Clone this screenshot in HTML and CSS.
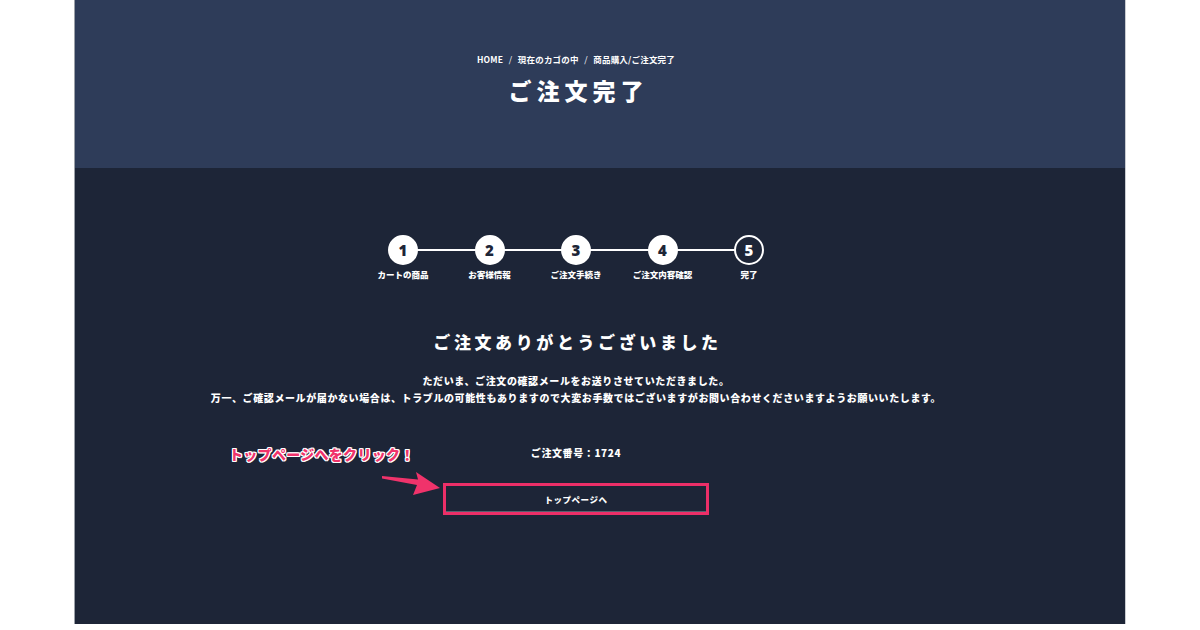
FILE: index.html
```html
<!DOCTYPE html>
<html lang="ja">
<head>
<meta charset="utf-8">
<title>ご注文完了</title>
<link rel="stylesheet" href="styles.css">
</head>
<body>
<div class="page">
  <header class="hero">
    <nav class="crumbs">HOME<span class="sep">/</span>現在のカゴの中<span class="sep">/</span>商品購入/ご注文完了</nav>
    <h1 class="title">ご注文完了</h1>
  </header>
  <main class="content">
    <ol class="steps">
      <li class="step"><span class="num">1</span><span class="label">カートの商品</span></li>
      <li class="step"><span class="num">2</span><span class="label">お客様情報</span></li>
      <li class="step"><span class="num">3</span><span class="label">ご注文手続き</span></li>
      <li class="step"><span class="num">4</span><span class="label">ご注文内容確認</span></li>
      <li class="step current"><span class="num">5</span><span class="label">完了</span></li>
    </ol>
    <h2 class="thanks">ご注文ありがとうございました</h2>
    <p class="message">ただいま、ご注文の確認メールをお送りさせていただきました。<br>万一、ご確認メールが届かない場合は、トラブルの可能性もありますので大変お手数ではございますがお問い合わせくださいますようお願いいたします。</p>
    <p class="order">ご注文番号：1724</p>
    <div class="action">
      <a class="top-btn" href="#">トップページへ</a>
      <span class="note">トップページへをクリック！</span>
      <svg class="arrow" width="62" height="26" viewBox="0 0 62 26"><polygon points="0,4 36,7.5 34,0 58,16 31,23 35,13 0,6.5" fill="#f0336b"/></svg>
    </div>
  </main>
</div>
</body>
</html>
```
FILE: styles.css
```css
* { box-sizing: border-box; }
html, body { margin: 0; padding: 0; background: #ffffff; }
body {
  font-family: "Noto Sans CJK JP", "Noto Sans", sans-serif;
  font-weight: 900;
  color: #ffffff;
}
.page {
  margin-left: 74px;
  width: 1052px;
  height: 624px;
  border-left: 1px solid #9ba0a8;
  border-right: 1px solid #c9ccd1;
  background: #1d2537;
  display: flex;
  flex-direction: column;
}
.hero {
  height: 168px;
  background: #2e3c59;
  display: flex;
  flex-direction: column;
  align-items: center;
  padding: 53px 48px 0 0;
}
.crumbs {
  font-size: 8.5px;
  line-height: 12px;
  letter-spacing: 0.2px;
  font-weight: 700;
  color: #ffffff;
}
.crumbs .sep { margin: 0 5.5px; font-weight: 400; }
.title {
  margin: 10px 0 0;
  font-size: 23px;
  line-height: 30px;
  letter-spacing: 5px;
  font-weight: 900;
  padding-left: 5px;
}
.content {
  flex: 1;
  display: flex;
  flex-direction: column;
  align-items: center;
  padding: 67px 48px 0 0;
}
.steps {
  list-style: none;
  margin: 0;
  padding: 0;
  display: grid;
  grid-template-columns: repeat(5, 86.5px);
}
.step {
  position: relative;
  display: flex;
  flex-direction: column;
  align-items: center;
}
.step + .step::before {
  content: "";
  position: absolute;
  top: 14px;
  left: -50%;
  width: 100%;
  height: 2px;
  background: #ffffff;
}
.num {
  position: relative;
  z-index: 1;
  width: 30px;
  height: 30px;
  border-radius: 50%;
  background: #ffffff;
  color: #1d2537;
  border: 2px solid #ffffff;
  display: flex;
  align-items: center;
  justify-content: center;
  font-family: "Noto Sans", "Noto Sans CJK JP", sans-serif;
  font-size: 15px;
  font-weight: 900;
  line-height: 1;
}
.step.current .num { background: #1d2537; color: #ffffff; }
.label {
  margin-top: 4px;
  font-size: 8.5px;
  line-height: 11px;
  font-weight: 900;
  white-space: nowrap;
}
.thanks {
  margin: 50px 0 0;
  font-size: 17px;
  line-height: 24px;
  letter-spacing: 3.6px;
  font-weight: 900;
  padding-left: 3px;
}
.message {
  margin: 18px 0 0;
  text-align: center;
  font-size: 10px;
  line-height: 17px;
  letter-spacing: 0.6px;
  font-weight: 900;
}
.order {
  margin: 40px 0 0;
  font-size: 10px;
  line-height: 13px;
  letter-spacing: 0.6px;
  font-weight: 900;
}
.action {
  position: relative;
  margin-top: 24px;
}
.top-btn {
  display: flex;
  align-items: center;
  justify-content: center;
  width: 266px;
  height: 32px;
  border: 3px solid #ec2f68;
  box-shadow: inset 0 -1px 0 rgba(200,210,220,0.35);
  color: #ffffff;
  text-decoration: none;
  font-size: 8.5px;
  font-weight: 900;
  letter-spacing: 0.5px;
}
.note {
  position: absolute;
  left: -214px;
  top: -38px;
  white-space: nowrap;
  font-size: 14px;
  line-height: 18px;
  font-weight: 900;
  letter-spacing: 0.3px;
  color: #f0336b;
  text-shadow: 1px 0 0 #fff, -1px 0 0 #fff, 0 1px 0 #fff, 0 -1px 0 #fff,
    1px 1px 0 #fff, -1px -1px 0 #fff, 1px -1px 0 #fff, -1px 1px 0 #fff;
}
.arrow {
  position: absolute;
  left: -61px;
  top: -11px;
}
```
